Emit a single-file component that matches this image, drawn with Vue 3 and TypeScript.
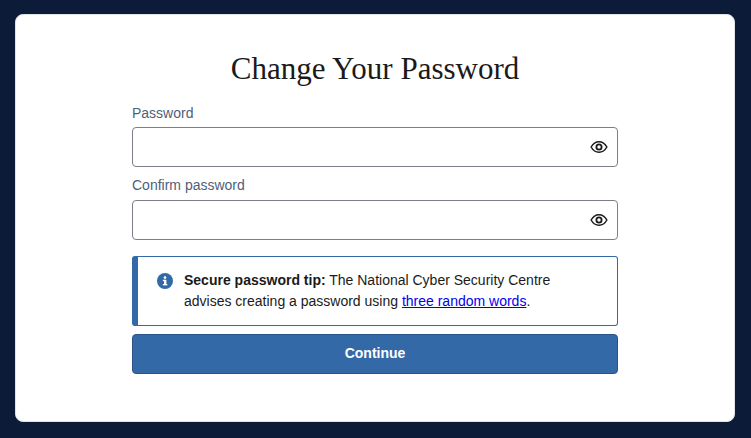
<script setup lang="ts">
const fields = ['Password', 'Confirm password']
</script>

<template>
  <div class="page">
    <main class="card">
      <h1 class="title">Change Your Password</h1>
      <form class="form" @submit.prevent>
        <div v-for="f in fields" :key="f" class="field">
          <label class="label">{{ f }}</label>
          <div class="input">
            <svg class="eye" viewBox="0 0 24 24" width="18" height="18" fill="none" stroke="#1a1a1a" stroke-width="2">
              <path d="M1.500 12C4 7.500 7.700 5 12 5s8 2.500 10.500 7c-2.500 4.500-6.200 7-10.500 7s-8-2.500-10.500-7z" />
              <circle cx="12" cy="12" r="3.500" stroke-width="2.400" />
            </svg>
          </div>
        </div>
        <div class="tip">
          <svg class="info" viewBox="0 0 16 16" width="16" height="16">
            <circle cx="8" cy="8" r="8" fill="#3469a8" />
            <rect x="7" y="6.800" width="2.400" height="5.200" fill="#fff" />
            <rect x="5.900" y="6.800" width="2" height="1.300" fill="#fff" />
            <rect x="5.900" y="11" width="4.400" height="1.400" fill="#fff" />
            <circle cx="8" cy="4.600" r="1.300" fill="#fff" />
          </svg>
          <p class="tip-text"><strong>Secure password tip:</strong> The National Cyber Security Centre advises creating a password using <a href="#" class="link">three random words</a>.</p>
        </div>
        <button class="btn" type="submit">Continue</button>
      </form>
    </main>
  </div>
</template>

<style>
html, body { margin: 0; background: #0b1b38; }
</style>

<style scoped>
.page { box-sizing: border-box; width: 751px; height: 438px; padding: 14px 16px 16px 15px; background: #0b1b38; font-family: "Liberation Sans", Arial, sans-serif; }
.card { box-sizing: border-box; height: 408px; background: #fff; border-radius: 8px; padding: 36px 116px 0; border: 1px solid #dfe3ea; }
.title { margin: 0 0 17px; text-align: center; font-family: "Liberation Serif", Georgia, serif; font-weight: 400; font-size: 31px; line-height: 36px; color: #1a1a1a; }
.form { display: flex; flex-direction: column; }
.field { margin-bottom: 9px; }
.label { display: block; font-size: 14px; line-height: 18px; color: #4e5f7a; margin-bottom: 5px; }
.field + .field .label { margin-bottom: 6px; }
.input { box-sizing: border-box; height: 40px; border: 1px solid #7b7f87; border-radius: 4px; display: flex; align-items: center; justify-content: flex-end; padding-right: 9px; }
.tip { box-sizing: border-box; height: 70px; display: flex; gap: 11px; border: 1px solid #3469a8; border-left-width: 6px; border-radius: 3px; padding: 13px 18px; margin-top: 7px; margin-bottom: 8px; }
.info { flex: none; margin-top: 3px; margin-left: 1px; }
.tip-text { margin: 0; font-size: 14px; line-height: 21px; color: #1a1a1a; }
.link { color: #0000ee; }
.btn { height: 40px; padding: 0 0 2px; background: #3469a8; color: #fff; border: 1px solid #2a5488; border-radius: 4px; font: 700 14px "Liberation Sans", Arial, sans-serif; }
</style>
